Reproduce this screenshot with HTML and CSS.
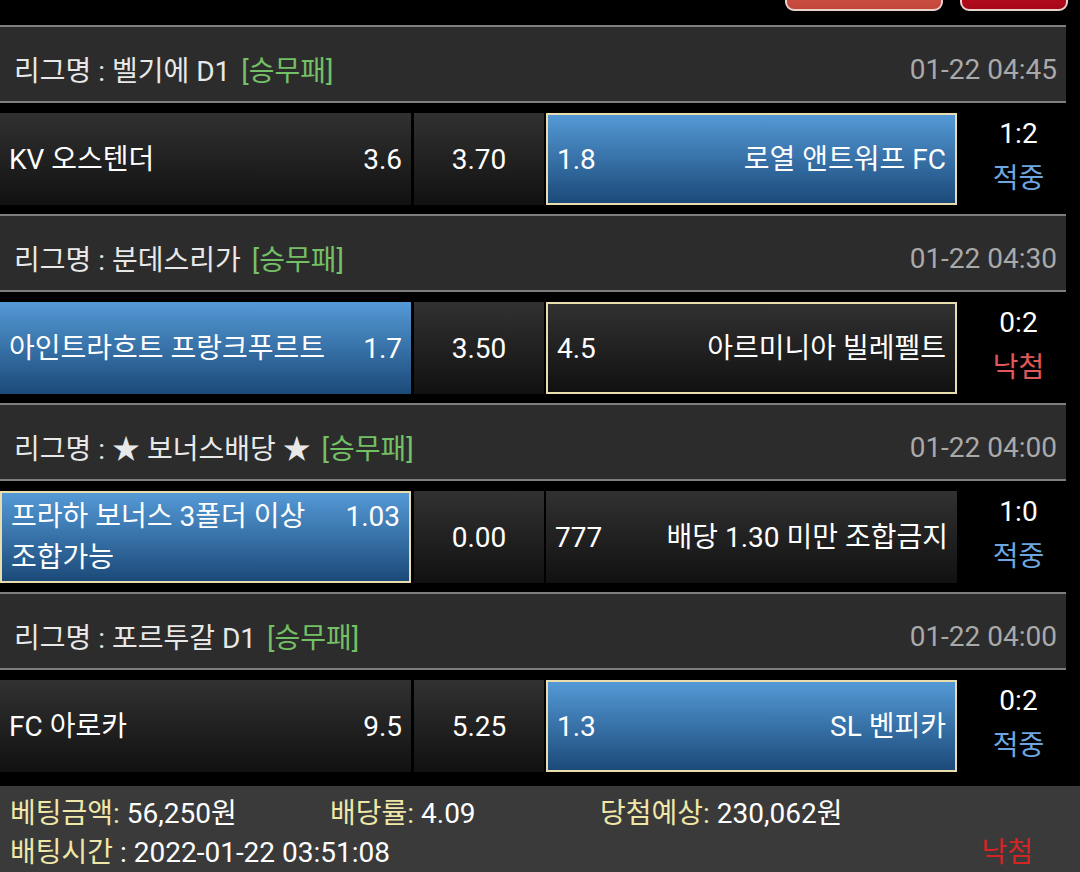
FILE: index.html
```html
<!DOCTYPE HTML>
<html lang="ko">
  <head>
    <title>배팅내역</title>
    <meta charset="utf-8">
    <link rel="stylesheet" href="styles.css">
  </head>
  <body>

  <div id="toolbar">
    <span class="btn btn-cancel"></span>
    <span class="btn btn-delete"></span>
  </div>

  <div class="league">
    <span>리그명 : 벨기에 D1 <span class="type">[승무패]</span></span>
    <span class="time">01-22 04:45</span>
  </div>
  <div class="match">
    <div class="cell home"><div class="team"><span>KV 오스텐더</span><span>3.6</span></div></div>
    <div class="cell draw">3.70</div>
    <div class="cell away win pick"><div class="team"><span>1.8</span><span>로열 앤트워프 FC</span></div></div>
    <div class="score"><span>1:2</span><span class="hit">적중</span></div>
  </div>

  <div class="league">
    <span>리그명 : 분데스리가 <span class="type">[승무패]</span></span>
    <span class="time">01-22 04:30</span>
  </div>
  <div class="match">
    <div class="cell home win"><div class="team"><span>아인트라흐트 프랑크푸르트</span><span>1.7</span></div></div>
    <div class="cell draw">3.50</div>
    <div class="cell away pick"><div class="team"><span>4.5</span><span>아르미니아 빌레펠트</span></div></div>
    <div class="score"><span>0:2</span><span class="miss">낙첨</span></div>
  </div>

  <div class="league">
    <span>리그명 : ★ 보너스배당 ★ <span class="type">[승무패]</span></span>
    <span class="time">01-22 04:00</span>
  </div>
  <div class="match">
    <div class="cell home win pick"><div class="team"><span>프라하 보너스 3폴더 이상 조합가능</span><span>1.03</span></div></div>
    <div class="cell draw">0.00</div>
    <div class="cell away"><div class="team"><span>777</span><span>배당 1.30 미만 조합금지</span></div></div>
    <div class="score"><span>1:0</span><span class="hit">적중</span></div>
  </div>

  <div class="league">
    <span>리그명 : 포르투갈 D1 <span class="type">[승무패]</span></span>
    <span class="time">01-22 04:00</span>
  </div>
  <div class="match">
    <div class="cell home"><div class="team"><span>FC 아로카</span><span>9.5</span></div></div>
    <div class="cell draw">5.25</div>
    <div class="cell away win pick"><div class="team"><span>1.3</span><span>SL 벤피카</span></div></div>
    <div class="score"><span>0:2</span><span class="hit">적중</span></div>
  </div>

  <div id="summary">
    <div class="line">
      <span class="item amount"><span class="label">베팅금액:</span> 56,250원</span>
      <span class="item rate"><span class="label">배당률:</span> 4.09</span>
      <span class="item"><span class="label">당첨예상:</span> 230,062원</span>
    </div>
    <div class="line">
      <span class="item"><span class="label">배팅시간</span> : 2022-01-22 03:51:08</span>
      <span class="result">낙첨</span>
    </div>
  </div>

  </body>
</html>
```

FILE: styles.css
```css
html {
  height: 100%;
}
body {
  margin: 0;
  padding: 0;
  background: #000000;
  color: #ffffff;
  font-family: Roboto, "Noto Sans CJK KR", sans-serif;
  font-size: 28px;
  height: 100%;
  overflow: hidden;
}

#toolbar {
  height: 25px;
  display: flex;
  justify-content: flex-end;
  align-items: flex-start;
  overflow: hidden;
}

.btn {
  display: block;
  height: 30px;
  margin-top: -19px;
  border-radius: 9px;
  box-sizing: border-box;
  border: 2px solid #ead2cc;
}
.btn-cancel {
  width: 158px;
  background: linear-gradient(#d65a4c, #c3463a);
}
.btn-delete {
  width: 108px;
  margin-left: 17px;
  margin-right: 12px;
  background: linear-gradient(#bf1020, #a80818);
}

.league {
  width: 1066px;
  height: 64px;
  border-top: 2px solid #7e7e7e;
  border-bottom: 2px solid #7e7e7e;
  background-color: #2c2c2c;
  display: flex;
  justify-content: space-between;
  align-items: center;
  padding: 10px 0 0 0;
  color: #e8e8e8;
}
.league > span:first-child {
  padding-left: 14px;
}
.league .type {
  color: #74c065;
  margin-left: 4px;
}
.league .time {
  color: #a9a9a9;
  padding-right: 9px;
}

.match {
  display: flex;
  height: 92px;
  margin: 10px 0 9px 0;
}

.cell {
  box-sizing: border-box;
  height: 92px;
  display: flex;
  align-items: center;
  padding: 0 9px;
  background: linear-gradient(#313131, #111111);
}
.cell.home {
  width: 411px;
}
.cell.draw {
  width: 130px;
  margin: 0 2px 0 3px;
  justify-content: center;
}
.cell.away {
  width: 411px;
}
.cell.win {
  background: linear-gradient(#5499d6, #1b4a79);
}
.cell.pick {
  border: 2px solid #e9ddae;
}

.team {
  width: 100%;
  display: flex;
  justify-content: space-between;
  align-items: flex-start;
  line-height: 41px;
}
.away .team span:last-child {
  text-align: right;
}
.home .team span:last-child {
  margin-left: 12px;
}

.score {
  flex: 1;
  display: flex;
  flex-direction: column;
  align-items: center;
  line-height: 45px;
  margin-top: -2px;
}
.hit {
  color: #6ea7df;
}
.miss {
  color: #e0595a;
}

#summary {
  margin-top: 14px;
  background-color: #3a3a3a;
  padding: 8px 0 0 10px;
  line-height: 39px;
  height: 100px;
}
#summary .line {
  display: flex;
  align-items: center;
}
#summary .amount {
  width: 320px;
}
#summary .rate {
  width: 270px;
}
#summary .label {
  color: #efe7a8;
}
#summary .result {
  margin-left: auto;
  margin-right: 47px;
  color: #d42525;
}
```
